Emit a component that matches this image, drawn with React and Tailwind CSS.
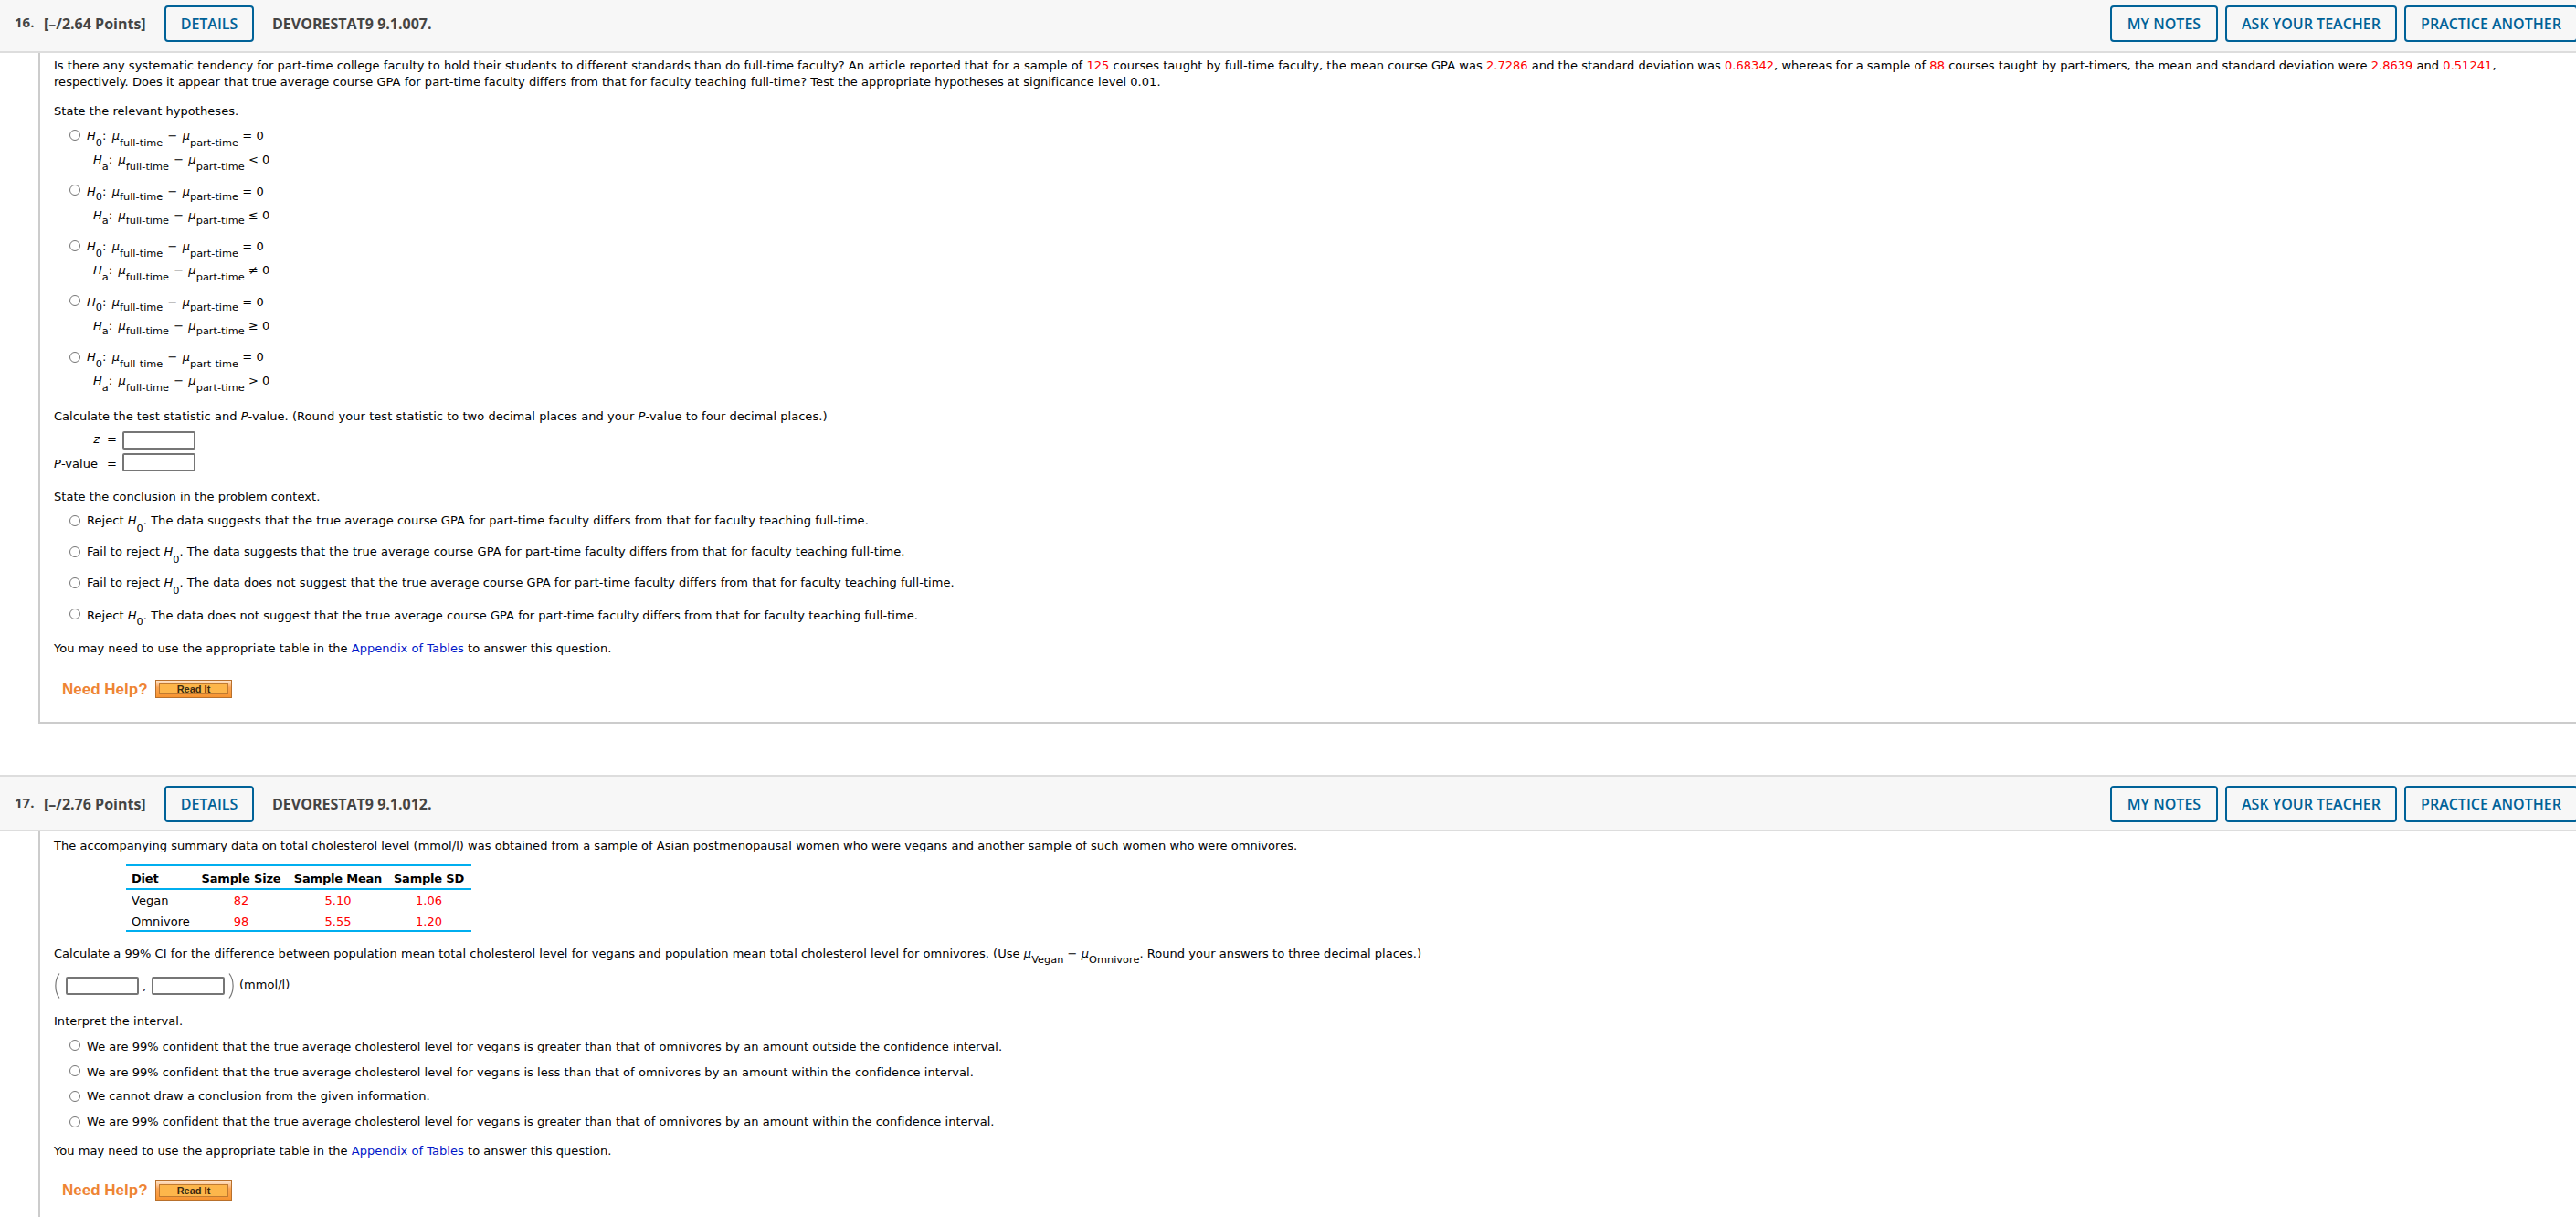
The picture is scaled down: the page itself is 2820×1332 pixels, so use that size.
import React from 'react';

const hypotheses = [
  { sign: '<', box: 'mt-[9px] h-11', sub: 'top-[7px]', radio: 'mt-[2px]', second: 'mt-2' },
  { sign: '≤', box: 'mt-[17px] h-11', sub: 'top-[5px]', radio: 'mt-[1px]', second: 'mt-2' },
  { sign: '≠', box: 'mt-4 h-11', sub: 'top-[7px]', radio: 'mt-[2px]', second: 'mt-2' },
  { sign: '≥', box: 'mt-[17px] h-11', sub: 'top-[5px]', radio: 'mt-[1px]', second: 'mt-2' },
  { sign: '>', box: 'mt-4 h-11', sub: 'top-[7px]', radio: 'mt-[3px]', second: 'mt-2' },
];

const conclusions = [
  { start: 'Reject', verb: 'suggests', box: 'mt-2', sub: 'top-[8px]', radio: 'mt-[3px]' },
  { start: 'Fail to reject', verb: 'suggests', box: 'mt-4', sub: 'top-[8px]', radio: 'mt-[3px]' },
  { start: 'Fail to reject', verb: 'does not suggest', box: 'mt-4', sub: 'top-[8px]', radio: 'mt-[3px]' },
  { start: 'Reject', verb: 'does not suggest', box: 'mt-[18px]', sub: 'top-[6px]', radio: 'mt-[1px]' },
];

const intervals = [
  {
    text: 'We are 99% confident that the true average cholesterol level for vegans is greater than that of omnivores by an amount outside the confidence interval.',
    box: 'mt-[10px]',
    radio: 'mt-[1px]',
  },
  {
    text: 'We are 99% confident that the true average cholesterol level for vegans is less than that of omnivores by an amount within the confidence interval.',
    box: 'mt-[10px]',
    radio: 'mt-[1px]',
  },
  { text: 'We cannot draw a conclusion from the given information.', box: 'mt-2', radio: 'mt-[3px]' },
  {
    text: 'We are 99% confident that the true average cholesterol level for vegans is greater than that of omnivores by an amount within the confidence interval.',
    box: 'mt-[10px]',
    radio: 'mt-[3px]',
  },
];

const Red = ({ children }) => <span className="text-[#ff0000]">{children}</span>;

const Sub = ({ children, offset }) => (
  <span className={`relative text-[11.3px] leading-none ${offset}`}>{children}</span>
);

const Radio = ({ className }) => (
  <input
    type="radio"
    className={`appearance-none shrink-0 size-3 mr-[7px] rounded-full border border-[#767676] bg-white ${className}`}
  />
);

const Answer = ({ className = '' }) => (
  <input
    type="text"
    className={`block w-20 h-5 border-2 border-[#767676] rounded-[2px] bg-white ${className}`}
  />
);

const HeaderButton = ({ children, className }) => (
  <button
    className={`h-10 pb-[3px] shrink-0 border-2 border-[#006298] rounded-[4px] text-[#006298] text-[16px] leading-9 font-semibold whitespace-nowrap ${className}`}
  >
    {children}
  </button>
);

const Header = ({ number, points, code, className }) => (
  <header
    className={`flex overflow-hidden bg-[#f7f7f7] border-[#ddd] text-[#444] text-[16px] leading-10 tracking-normal font-bold font-['Open_Sans',sans-serif] ${className}`}
  >
    <span className="w-8 ml-4 -mt-[2px] shrink-0 text-[15px]">{number}.</span>
    <span className="w-[132px] shrink-0">[–/{points} Points]</span>
    <HeaderButton className="w-[98px]">DETAILS</HeaderButton>
    <span className="ml-5 grow">{code}</span>
    <div className="flex gap-2 w-[510px] shrink-0">
      <HeaderButton className="w-[118px]">MY NOTES</HeaderButton>
      <HeaderButton className="w-[188px]">ASK YOUR TEACHER</HeaderButton>
      <HeaderButton className="w-[190px]">PRACTICE ANOTHER</HeaderButton>
    </div>
  </header>
);

const Hypothesis = ({ letter, sign, offset }) => (
  <span className="[word-spacing:1px]">
    <i>H</i>
    <Sub offset={offset}>{letter}</Sub>: <i className="ml-[1px]">μ</i>
    <Sub offset={offset}>full-time</Sub> − <i>μ</i>
    <Sub offset={offset}>part-time</Sub>
    <span className="[word-spacing:0px]"> {sign} 0</span>
  </span>
);

const TablesNote = ({ className }) => (
  <p className={className}>
    You may need to use the appropriate table in the{' '}
    <a className="text-[#0016c8]">Appendix of Tables</a> to answer this question.
  </p>
);

const NeedHelp = ({ className, button }) => (
  <div className={`flex ml-[9px] tracking-normal font-['Liberation_Sans',sans-serif] ${className}`}>
    <span className="w-[102px] pt-px text-[17px] leading-5 font-bold text-[#ee8434]">Need Help?</span>
    <button
      className={`w-[84px] p-[3px] border border-[#b8702c] bg-linear-to-b from-[#fde3c8] via-[#fba553] via-40% to-[#f7942f] ${button}`}
    >
      <span className="flex h-full items-center justify-center border border-[#c07a30] bg-[#fdb64b] text-[11px] leading-none font-bold text-[#3a2a10]">
        Read It
      </span>
    </button>
  </div>
);

const Paren = ({ flip }) => (
  <svg className="w-2 h-7 shrink-0" viewBox="0 0 8 28" fill="none" stroke="#777" strokeWidth="1.2">
    <path d={flip ? 'M1 0.5C6.5 8 6.5 20 1 27.5' : 'M6 0.5C0.5 8 0.5 20 6 27.5'} />
  </svg>
);

function App() {
  return (
    <div className="w-[2820px] h-[1332px] overflow-hidden bg-white text-black text-[13px] leading-[18px] tracking-[0.04px] whitespace-nowrap font-['DejaVu_Sans',sans-serif]">
      <Header number="16" points="2.64" code="DEVORESTAT9 9.1.007." className="h-[58px] pt-[6px] border-b-2" />

      <section className="h-[734px] ml-[42px] pl-[15px] pt-[5px] border-l-2 border-b-2 border-[#ccc]">
        <p>
          Is there any systematic tendency for part-time college faculty to hold their students to different
          standards than do full-time faculty? An article reported that for a sample of <Red>125</Red> courses
          taught by full-time faculty, the mean course GPA was <Red>2.7286</Red> and the standard deviation was{' '}
          <Red>0.68342</Red>, whereas for a sample of <Red>88</Red> courses taught by part-timers, the mean and
          standard deviation were <Red>2.8639</Red> and <Red>0.51241</Red>,
          <br />
          respectively. Does it appear that true average course GPA for part-time faculty differs from that for
          faculty teaching full-time? Test the appropriate hypotheses at significance level 0.01.
        </p>
        <p className="mt-[14px]">State the relevant hypotheses.</p>

        {hypotheses.map((h) => (
          <label key={h.sign} className={`flex ml-[17px] ${h.box}`}>
            <Radio className={h.radio} />
            <div>
              <div>
                <Hypothesis letter="0" sign="=" offset={h.sub} />
              </div>
              <div className={`ml-[7px] ${h.second}`}>
                <Hypothesis letter="a" sign={h.sign} offset={h.sub} />
              </div>
            </div>
          </label>
        ))}

        <p className="mt-[21px]">
          Calculate the test statistic and <i>P</i>-value. (Round your test statistic to two decimal places and
          your <i>P</i>-value to four decimal places.)
        </p>
        <div className="flex mt-[7px] h-6">
          <span className="w-[50px] text-right"><i>z</i></span>
          <span className="w-[25px] pl-2">=</span>
          <Answer />
        </div>
        <div className="flex">
          <span className="w-[50px] mt-[3px]"><i>P</i>-value</span>
          <span className="w-[25px] pl-2 mt-[3px]">=</span>
          <Answer />
        </div>
        <p className="mt-[18px]">State the conclusion in the problem context.</p>

        {conclusions.map((c) => (
          <label key={c.start + c.verb} className={`flex ml-[17px] ${c.box}`}>
            <Radio className={c.radio} />
            <span>
              {c.start} <i>H</i>
              <Sub offset={c.sub}>0</Sub>. The data {c.verb} that the true average course GPA for part-time
              faculty differs from that for faculty teaching full-time.
            </span>
          </label>
        ))}

        <TablesNote className="mt-[18px]" />
        <NeedHelp className="mt-[25px]" button="h-5" />
      </section>

      <Header
        number="17"
        points="2.76"
        code="DEVORESTAT9 9.1.012."
        className="h-[62px] mt-14 pt-[10px] border-y-2"
      />

      <section className="h-[422px] ml-[42px] pl-[15px] pt-[7px] border-l-2 border-[#ccc]">
        <p>
          The accompanying summary data on total cholesterol level (mmol/l) was obtained from a sample of Asian
          postmenopausal women who were vegans and another sample of such women who were omnivores.
        </p>

        <table className="table-fixed w-[378px] ml-[79px] mt-[11px] border-y-2 border-[#00aeef] text-center">
          <colgroup>
            <col className="w-[73px]" />
            <col className="w-[106px]" />
            <col className="w-[106px]" />
            <col className="w-[93px]" />
          </colgroup>
          <thead>
            <tr className="h-[26px] border-b-2 border-[#00aeef] font-bold tracking-[-0.2px]">
              <th className="text-left pl-[6px] pt-1">Diet</th>
              <th className="pt-1">Sample Size</th>
              <th className="pt-1">Sample Mean</th>
              <th className="pt-1">Sample SD</th>
            </tr>
          </thead>
          <tbody>
            <tr className="h-6">
              <td className="text-left pl-[6px]">Vegan</td>
              <td><Red>82</Red></td>
              <td><Red>5.10</Red></td>
              <td><Red>1.06</Red></td>
            </tr>
            <tr className="h-[22px]">
              <td className="text-left pl-[6px] pt-[2px]">Omnivore</td>
              <td className="pt-[2px]"><Red>98</Red></td>
              <td className="pt-[2px]"><Red>5.55</Red></td>
              <td className="pt-[2px]"><Red>1.20</Red></td>
            </tr>
          </tbody>
        </table>

        <p className="mt-[15px]">
          Calculate a 99% CI for the difference between population mean total cholesterol level for vegans and
          population mean total cholesterol level for omnivores. (Use <i>μ</i>
          <Sub offset="top-[6px]">Vegan</Sub> − <i>μ</i>
          <Sub offset="top-[6px]">Omnivore</Sub>. Round your answers to three decimal places.)
        </p>
        <div className="flex items-center h-7 mt-3">
          <Paren />
          <Answer className="ml-[5px]" />
          <span className="w-[14px] pl-1 pt-[2px]">,</span>
          <Answer />
          <span className="w-[4px]"></span>
          <Paren flip />
          <span className="ml-[4px] pb-[2px]">(mmol/l)</span>
        </div>
        <p className="mt-4">Interpret the interval.</p>

        {intervals.map((item) => (
          <label key={item.text} className={`flex ml-[17px] ${item.box}`}>
            <Radio className={item.radio} />
            <span>{item.text}</span>
          </label>
        ))}

        <TablesNote className="mt-[14px]" />
        <NeedHelp className="mt-[23px]" button="h-[22px]" />
      </section>
    </div>
  );
}

export default App;
